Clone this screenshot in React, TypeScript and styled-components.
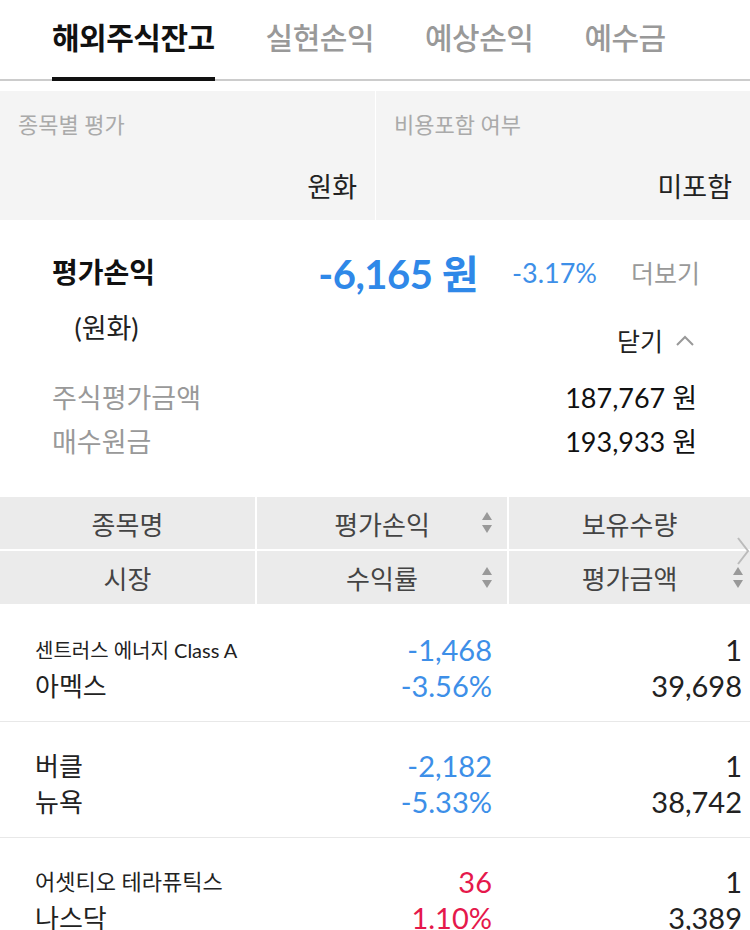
import React from "react";
import styled, { createGlobalStyle } from "styled-components";

const Global = createGlobalStyle`
  html, body { margin: 0; padding: 0; background: #fff; overflow: hidden; }
  body { font-family: Lato, "Noto Sans CJK KR", sans-serif; color: #222; }
  * { box-sizing: border-box; }
`;

const Page = styled.div`
  width: 750px;
  height: 930px;
  overflow: hidden;
  background: #fff;
`;

const TabBar = styled.div`
  display: flex;
  gap: 51px;
  height: 81px;
  padding: 0 0 8px 52px;
  align-items: center;
  border-bottom: 2px solid #cccccc;
`;

const Tab = styled.div<{ $active?: boolean }>`
  position: relative;
  height: 100%;
  display: flex;
  align-items: center;
  font-size: 30px;
  font-weight: ${(p) => (p.$active ? 700 : 500)};
  color: ${(p) => (p.$active ? "#111" : "#999")};
  letter-spacing: -0.5px;
  &::after {
    content: "";
    display: ${(p) => (p.$active ? "block" : "none")};
    position: absolute;
    left: 0;
    right: 0;
    bottom: -10px;
    height: 4px;
    background: #111;
  }
`;

const Settings = styled.div`
  margin-top: 10px;
  display: grid;
  grid-template-columns: 375px 1fr;
  gap: 1px;
  background: #fff;
  height: 129px;
`;

const SettingCell = styled.div`
  background: #f4f4f4;
  padding: 19px 18px 0 18px;
  display: flex;
  flex-direction: column;
`;

const SettingLabel = styled.div`
  font-size: 22px;
  line-height: 30px;
  color: #aaa;
`;

const SettingValue = styled.div`
  margin-top: 28px;
  font-size: 27px;
  line-height: 38px;
  color: #222;
  text-align: right;
`;

const Summary = styled.div`
  padding: 32px 50px 35px 52px;
`;

const SummaryHead = styled.div`
  display: flex;
  justify-content: space-between;
`;

const HeadLeft = styled.div`
  display: flex;
  flex-direction: column;
  align-items: center;
`;

const Title = styled.div`
  font-size: 28px;
  line-height: 40px;
  font-weight: 700;
  color: #111;
`;

const Currency = styled.div`
  margin-top: 16px;
  font-size: 27px;
  line-height: 40px;
  color: #222;
  padding-left: 6px;
`;

const HeadRight = styled.div`
  display: flex;
  flex-direction: column;
  align-items: flex-end;
`;

const AmountRow = styled.div`
  display: flex;
  align-items: center;
  height: 40px;
`;

const BigAmount = styled.div`
  font-size: 40px;
  font-weight: 700;
  color: #2f88e8;
  letter-spacing: -0.5px;
`;

const Pct = styled.div`
  margin-left: 34px;
  font-size: 27px;
  font-weight: 400;
  color: #3d8fe8;
`;

const More = styled.div`
  margin-left: 34px;
  font-size: 25px;
  color: #999;
`;

const Toggle = styled.div`
  margin-top: 28px;
  margin-right: 5px;
  height: 40px;
  display: flex;
  align-items: center;
  gap: 12px;
  font-size: 25px;
  color: #222;
`;

const Details = styled.div`
  margin-top: 14px;
  padding-right: 3px;
`;

const DetailRow = styled.div`
  display: flex;
  justify-content: space-between;
  align-items: center;
  height: 44px;
`;

const DetailLabel = styled.div`
  font-size: 27px;
  color: #999;
`;

const DetailValue = styled.div`
  font-size: 27px;
  color: #111;
`;

const TableHead = styled.div`
  position: relative;
  display: grid;
  grid-template-columns: 255px 250px 1fr;
  grid-template-rows: 52px 53px;
  gap: 2px;
  background: #fff;
`;

const HeadCell = styled.div`
  position: relative;
  background: #ebebeb;
  display: flex;
  align-items: center;
  justify-content: center;
  font-size: 26px;
  color: #444;
`;

const SortIcon = styled.svg<{ $right: number }>`
  position: absolute;
  right: ${(p) => p.$right}px;
  top: 50%;
  transform: translateY(-50%);
`;

const NextArrow = styled.svg`
  position: absolute;
  right: 0;
  top: 39px;
`;

const Rows = styled.div`
  margin-top: 2px;
`;

const Row = styled.div`
  display: grid;
  grid-template-columns: 255px 252px 1fr;
  height: 116px;
  border-bottom: 1px solid #e8e8e8;
  padding-top: 26px;
`;

const Col = styled.div<{ $align: "left" | "right"; $pad: number }>`
  display: flex;
  flex-direction: column;
  align-items: ${(p) => (p.$align === "left" ? "flex-start" : "flex-end")};
  padding-left: ${(p) => (p.$align === "left" ? p.$pad : 0)}px;
  padding-right: ${(p) => (p.$align === "right" ? p.$pad : 0)}px;
`;

const Line = styled.div<{ $size: number; $color?: string }>`
  height: 36px;
  line-height: 36px;
  font-size: ${(p) => p.$size}px;
  color: ${(p) => p.$color || "#222"};
  white-space: nowrap;
`;

const Sort = ({ right }: { right: number }) => (
  <SortIcon $right={right} width="12" height="26" viewBox="0 0 12 26">
    <polygon points="6,2 11,10 1,10" fill="#999" />
    <polygon points="1,15 11,15 6,23" fill="#999" />
  </SortIcon>
);

const BLUE = "#3d8fe8";
const RED = "#e5184b";

const stocks = [
  { name: "센트러스 에너지 Class A", nameSize: 20, market: "아멕스", pl: "-1,468", rate: "-3.56%", qty: "1", value: "39,698", color: BLUE },
  { name: "버클", nameSize: 26, market: "뉴욕", pl: "-2,182", rate: "-5.33%", qty: "1", value: "38,742", color: BLUE },
  { name: "어셋티오 테라퓨틱스", nameSize: 22, market: "나스닥", pl: "36", rate: "1.10%", qty: "1", value: "3,389", color: RED },
];

export default function App() {
  return (
    <Page>
      <Global />
      <TabBar>
        <Tab $active>해외주식잔고</Tab>
        <Tab>실현손익</Tab>
        <Tab>예상손익</Tab>
        <Tab>예수금</Tab>
      </TabBar>

      <Settings>
        <SettingCell>
          <SettingLabel>종목별 평가</SettingLabel>
          <SettingValue>원화</SettingValue>
        </SettingCell>
        <SettingCell>
          <SettingLabel>비용포함 여부</SettingLabel>
          <SettingValue>미포함</SettingValue>
        </SettingCell>
      </Settings>

      <Summary>
        <SummaryHead>
          <HeadLeft>
            <Title>평가손익</Title>
            <Currency>(원화)</Currency>
          </HeadLeft>
          <HeadRight>
            <AmountRow>
              <BigAmount>-6,165 원</BigAmount>
              <Pct>-3.17%</Pct>
              <More>더보기</More>
            </AmountRow>
            <Toggle>
              닫기
              <svg width="20" height="12" viewBox="0 0 20 12">
                <polyline points="2,11 10,3 18,11" fill="none" stroke="#999" strokeWidth="2" />
              </svg>
            </Toggle>
          </HeadRight>
        </SummaryHead>
        <Details>
          <DetailRow>
            <DetailLabel>주식평가금액</DetailLabel>
            <DetailValue>187,767 원</DetailValue>
          </DetailRow>
          <DetailRow>
            <DetailLabel>매수원금</DetailLabel>
            <DetailValue>193,933 원</DetailValue>
          </DetailRow>
        </Details>
      </Summary>

      <TableHead>
        <HeadCell>종목명</HeadCell>
        <HeadCell>
          평가손익
          <Sort right={14} />
        </HeadCell>
        <HeadCell>보유수량</HeadCell>
        <HeadCell>시장</HeadCell>
        <HeadCell>
          수익률
          <Sort right={14} />
        </HeadCell>
        <HeadCell>
          평가금액
          <Sort right={6} />
        </HeadCell>
        <NextArrow width="14" height="30" viewBox="0 0 14 30">
          <polyline points="2,2 12,15 2,28" fill="none" stroke="#bbb" strokeWidth="2" />
        </NextArrow>
      </TableHead>

      <Rows>
        {stocks.map((s) => (
          <Row key={s.name}>
            <Col $align="left" $pad={35}>
              <Line $size={s.nameSize}>{s.name}</Line>
              <Line $size={26}>{s.market}</Line>
            </Col>
            <Col $align="right" $pad={15}>
              <Line $size={29} $color={s.color}>{s.pl}</Line>
              <Line $size={29} $color={s.color}>{s.rate}</Line>
            </Col>
            <Col $align="right" $pad={8}>
              <Line $size={29}>{s.qty}</Line>
              <Line $size={29}>{s.value}</Line>
            </Col>
          </Row>
        ))}
      </Rows>
    </Page>
  );
}
